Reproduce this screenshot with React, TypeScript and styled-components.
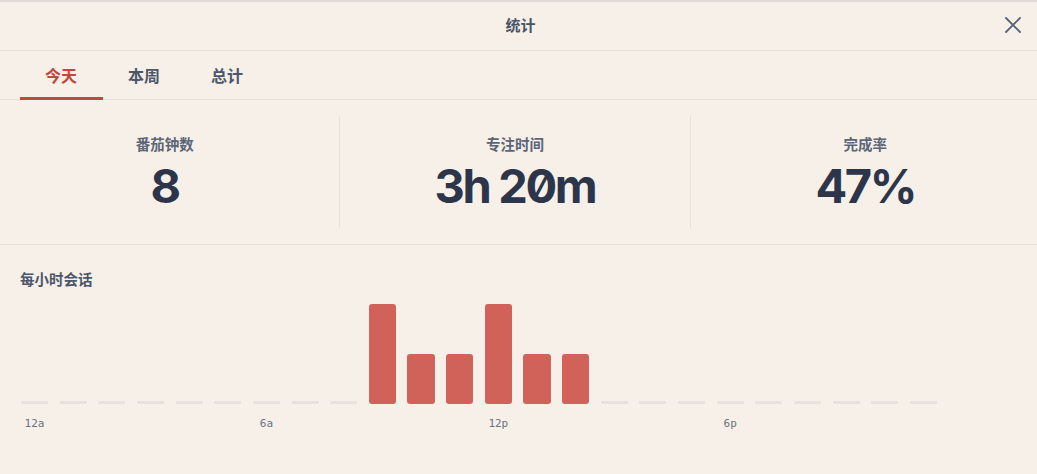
import styled, { createGlobalStyle } from "styled-components";

const GlobalStyle = createGlobalStyle`
    html, body {
        margin: 0;
        padding: 0;
        background: #f6f0e9;
    }
    body {
        font-family: Inter, "Noto Sans CJK SC", sans-serif;
    }
`

const hours = [0, 0, 0, 0, 0, 0, 0, 0, 0, 2, 1, 1, 2, 1, 1, 0, 0, 0, 0, 0, 0, 0, 0, 0];
const maxCount = 2;
const hourLabels: Record<number, string> = { 0: "12a", 6: "6a", 12: "12p", 18: "6p" };

const tabs = ["今天", "本周", "总计"];

const stats = [
    { label: "番茄钟数", value: "8" },
    { label: "专注时间", value: "3h 20m" },
    { label: "完成率", value: "47%" },
];

const App = () => {
    return (
        <Modal>
            <GlobalStyle />
            <Header>
                <span />
                <Title>统计</Title>
                <CloseButton aria-label="关闭">
                    <svg width="16" height="16" viewBox="0 0 16 16" fill="none" stroke="currentColor" strokeWidth="1.9" strokeLinecap="round">
                        <path d="M1 1L15 15M15 1L1 15" />
                    </svg>
                </CloseButton>
            </Header>
            <Tabs>
                {tabs.map((t, i) => (
                    <Tab key={t} active={i === 0}>{t}</Tab>
                ))}
            </Tabs>
            <StatsRow>
                {stats.map((s, i) => (
                    <>
                        {i > 0 && <Divider key={"d" + i} />}
                        <StatCell key={s.label}>
                            <StatLabel>{s.label}</StatLabel>
                            <StatValue>{s.value}</StatValue>
                        </StatCell>
                    </>
                ))}
            </StatsRow>
            <ChartSection>
                <ChartTitle>每小时会话</ChartTitle>
                <Bars>
                    {hours.map((c, i) => (
                        <BarSlot key={i}>
                            {c > 0 ? (
                                <Bar style={{ height: `${(c / maxCount) * 100}%` }} />
                            ) : (
                                <EmptyBar />
                            )}
                        </BarSlot>
                    ))}
                </Bars>
                <Labels>
                    {hours.map((_, i) => (
                        <HourLabel key={i}>{hourLabels[i] || ""}</HourLabel>
                    ))}
                </Labels>
            </ChartSection>
        </Modal>
    );
}

const Modal = styled.div`
    width: 1037px;
    height: 474px;
    box-sizing: border-box;
    border-top: 2px solid #dedad4;
    background: #f6f0e9;
    color: #2f3a4f;
`

const Header = styled.div`
    display: grid;
    grid-template-columns: 1fr auto 1fr;
    align-items: center;
    height: 49px;
    box-sizing: border-box;
    padding: 0 10px 4px 14px;
    border-bottom: 1px solid #e4dfd8;
`

const Title = styled.div`
    font-size: 15px;
    font-weight: 700;
    color: #4a5366;
`

const CloseButton = styled.button`
    justify-self: end;
    display: flex;
    align-items: center;
    justify-content: center;
    width: 28px;
    height: 28px;
    margin-top: 2px;
    padding: 0;
    border: none;
    background: transparent;
    color: #5a6477;
    cursor: pointer;
`

const Tabs = styled.div`
    display: flex;
    height: 48px;
    padding: 0 20px;
    border-bottom: 1px solid #e4dfd8;
`

const Tab = styled.div<{ active?: boolean }>`
    display: flex;
    align-items: center;
    padding: 2px 26px 0 25px;
    font-size: 16px;
    font-weight: 700;
    color: ${props => props.active ? "#c2473d" : "#4d566a"};
    border-bottom: 3px solid ${props => props.active ? "#c2473d" : "transparent"};
    margin-bottom: -1px;
`

const StatsRow = styled.div`
    display: grid;
    grid-template-columns: 1fr 1px 1fr 1px 1fr;
    column-gap: 10px;
    padding: 16px 7px 16px 0;
    border-bottom: 1px solid #e4dfd8;
`

const Divider = styled.div`
    background: #e6e1da;
`

const StatCell = styled.div`
    display: flex;
    flex-direction: column;
    align-items: center;
    padding: 20px 0 16px;
    height: 76px;
`

const StatLabel = styled.div`
    font-size: 14.5px;
    font-weight: 700;
    color: #5c6577;
    line-height: 18px;
`

const StatValue = styled.div`
    margin-top: 6px;
    font-size: 47px;
    font-weight: 700;
    line-height: 52px;
    letter-spacing: -0.05em;
    font-feature-settings: "zero" 1;
    color: #2c354a;
`

const ChartSection = styled.div`
    padding: 26px 20px 0 21px;
`

const ChartTitle = styled.div`
    margin-left: -1px;
    font-size: 14.5px;
    font-weight: 700;
    color: #4d566a;
    line-height: 18px;
`

const Bars = styled.div`
    display: grid;
    grid-template-columns: repeat(24, 1fr);
    column-gap: 11.6px;
    width: 916px;
    height: 100px;
    margin-top: 15px;
`

const BarSlot = styled.div`
    display: flex;
    align-items: flex-end;
`

const Bar = styled.div`
    width: 100%;
    background: #d0625a;
    border-radius: 3px;
`

const EmptyBar = styled.div`
    width: 100%;
    height: 3px;
    background: #e7e2db;
    border-radius: 1px;
`

const Labels = styled.div`
    display: grid;
    grid-template-columns: repeat(24, 1fr);
    column-gap: 11.6px;
    width: 916px;
    margin-top: 13px;
`

const HourLabel = styled.div`
    display: flex;
    justify-content: center;
    white-space: nowrap;
    font-family: "DejaVu Sans Mono", monospace;
    font-size: 11px;
    color: #6b7282;
    line-height: 14px;
`

export default App;
